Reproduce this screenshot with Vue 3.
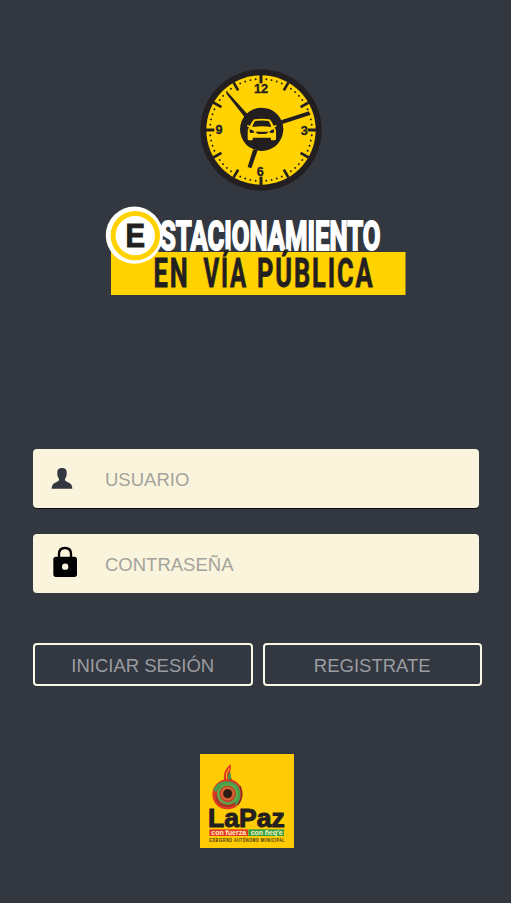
<script setup>
const ticks = [1, 2, 4, 5, 7, 8, 10, 11].map((h) => h * 30)
const quarters = [0, 90, 180, 270]
const dots = Array.from({ length: 60 }, (_, i) => i)
  .filter((i) => i % 5 !== 0)
  .map((i) => i * 6)
</script>

<template>
  <main class="screen">
    <svg class="clock" viewBox="15 14 366 366" aria-hidden="true">
      <circle cx="198" cy="197" r="182" fill="#231f20" />
      <circle cx="198" cy="197" r="164" fill="#ffd200" />
      <g fill="#231f20">
        <circle v-for="a in dots" :key="a" cx="198" cy="44" r="2.9" :transform="`rotate(${a} 198 197)`" />
        <rect v-for="a in ticks" :key="a" x="194" y="32" width="8" height="28" :transform="`rotate(${a} 198 197)`" />
        <rect v-for="a in quarters" :key="a" x="193.5" y="30" width="9" height="27" :transform="`rotate(${a} 198 197)`" />
      </g>
      <g class="numerals">
        <text x="198" y="87" text-anchor="middle">12</text>
        <text x="328" y="212" text-anchor="middle">3</text>
        <text x="196" y="335" text-anchor="middle">6</text>
        <text x="72" y="208" text-anchor="middle">9</text>
      </g>
      <g fill="#231f20">
        <path d="M98 84 L160 152 L151 161 L94 88Z" />
        <path d="M342 141 L345 152 L262 179 L258 168Z" />
        <path d="M174 256 L188 258 L169 312 L158 308Z" />
        <circle cx="200" cy="195" r="65" />
      </g>
      <path
        fill="#ffd200"
        d="M178 165 Q200 162 223 165 Q228 168 236 184 L244 182 Q247 187 239 189 Q243 195 243 204 V223 Q243 228 238 228 H231 Q227 228 227 220 H174 Q174 228 169 228 H162 Q158 228 158 223 V204 Q158 195 162 189 Q154 187 157 182 L165 184 Q173 167 178 165Z"
      />
      <g fill="#231f20">
        <path d="M180 170 Q200 167 221 170 Q226 177 229 188 Q200 184 172 188 Q175 177 180 170Z" />
        <path d="M163 195 Q172 195 179 203 Q174 207 165 205Z" />
        <path d="M238 195 Q229 195 222 203 Q227 207 236 205Z" />
        <path d="M182 202 H220 Q217 209 210 209 H191 Q184 208 182 202Z" />
      </g>
    </svg>

    <svg class="title" viewBox="106 206 300 90">
      <rect x="111" y="252" width="294.5" height="43" fill="#ffd200" />
      <text class="top" x="160" y="249.500" textLength="220.500" lengthAdjust="spacingAndGlyphs">STACIONAMIENTO</text>
      <g class="bottom">
        <text x="153.5" y="287" textLength="36" lengthAdjust="spacingAndGlyphs">EN</text>
        <text x="203.5" y="287" textLength="44.5" lengthAdjust="spacingAndGlyphs">VÍA</text>
        <text x="257" y="287" textLength="117.500" lengthAdjust="spacingAndGlyphs">PÚBLICA</text>
      </g>
      <circle cx="134.4" cy="235.2" r="28.6" fill="#fff" />
      <circle cx="135.3" cy="235.6" r="22.2" fill="none" stroke="#ffd200" stroke-width="5" />
      <text class="badge" x="125.4" y="246.8" textLength="19.5" lengthAdjust="spacingAndGlyphs">E</text>
    </svg>

    <form class="form" @submit.prevent>
      <div class="field">
        <svg class="icon" viewBox="75 75 90 90" aria-hidden="true">
          <path
            fill="#33373f"
            d="M111 84 Q125 84 125 96 L125 104 Q124 112 120 116 V121 Q122 125 132 128 Q142 132 142 146 H80 Q80 132 90 128 Q100 125 102 121 V116 Q98 112 97 104 L97 96 Q97 84 111 84Z"
          />
        </svg>
        <span>USUARIO</span>
      </div>
      <div class="field">
        <svg class="icon" viewBox="75 330 90 90" aria-hidden="true">
          <path d="M102 354 V342 Q102 324 120 324 Q138 324 138 342 V354" fill="none" stroke="#000" stroke-width="7" />
          <rect x="85" y="350" width="71" height="61" rx="8" />
          <circle cx="120.500" cy="380" r="9.500" fill="#fbf4dc" />
        </svg>
        <span>CONTRASEÑA</span>
      </div>
      <div class="actions">
        <button type="submit">INICIAR SESIÓN</button>
        <button type="button">REGISTRATE</button>
      </div>
    </form>

    <svg class="logo" viewBox="15 12 282 282">
      <rect x="15" y="12" width="282" height="282" fill="#ffcb05" />
      <path fill="#df3527" d="M107 42 Q82 62 87 90 Q66 97 55 120 L98 133 L138 113 Q130 96 112 90 Q104 80 105 66 Q110 56 107 42Z" />
      <path fill="none" stroke="#ffcb05" stroke-width="3" d="M103 55 Q88 75 98 93" />
      <path fill="#3b9d4b" d="M104 66 Q94 80 103 98 L114 99 Q104 87 108 72Z" />
      <circle cx="97" cy="133" r="45" fill="#df3527" />
      <path d="M60 124 Q67 100 94 99 Q127 99 131 130 Q132 151 119 163" fill="none" stroke="#43a04c" stroke-width="10" />
      <circle cx="98" cy="132" r="28" fill="none" stroke="#5aa44a" stroke-width="8" />
      <path d="M63 137 Q66 168 99 168 Q112 168 121 160" fill="none" stroke="#8c3c22" stroke-width="4" />
      <circle cx="98" cy="131" r="23" fill="#b5402b" />
      <circle cx="98" cy="131" r="18" fill="none" stroke="#d96a32" stroke-width="5" />
      <circle cx="98" cy="131" r="13" fill="#2a1b17" />
      <path d="M135 108 Q149 139 128 165" fill="none" stroke="#7e2822" stroke-width="4" />
      <text class="city" x="39" y="231" textLength="230" lengthAdjust="spacingAndGlyphs">LaPaz</text>
      <rect x="43" y="238" width="116" height="20" fill="#e33b25" />
      <rect x="160" y="238" width="107" height="20" fill="#35a047" />
      <g class="slogan">
        <text x="49" y="254" textLength="104" lengthAdjust="spacingAndGlyphs">con fuerza</text>
        <text x="167" y="254" textLength="96" lengthAdjust="spacingAndGlyphs">con ñeq'e</text>
      </g>
      <text class="office" x="42" y="275" textLength="228" lengthAdjust="spacingAndGlyphs">GOBIERNO AUTÓNOMO MUNICIPAL</text>
    </svg>
  </main>
</template>

<style>
body {
  margin: 0;
  background: #33373f;
}
</style>

<style scoped>
.screen {
  box-sizing: border-box;
  width: 511px;
  height: 903px;
  padding-top: 69px;
  display: flex;
  flex-direction: column;
  align-items: flex-start;
  overflow: hidden;
  background: #33373f;
  font-family: "Liberation Sans", Arial, sans-serif;
}
svg {
  display: block;
  flex: none;
}
.clock {
  width: 122px;
  height: 122px;
  margin-left: 200px;
}
.numerals {
  font-size: 38px;
  font-weight: 700;
  fill: #231f20;
  stroke: #231f20;
  stroke-width: 1px;
}
.title {
  width: 300px;
  height: 90px;
  margin: 15px 0 0 106px;
  overflow: visible;
}
.top {
  font-family: Roboto, sans-serif;
  font-size: 41px;
  font-weight: 700;
  fill: #fff;
  stroke: #fff;
  stroke-width: 2px;
}
.bottom {
  font-family: Roboto, sans-serif;
  font-size: 40px;
  font-weight: 700;
  letter-spacing: 3px;
  fill: #231f20;
  stroke: #231f20;
  stroke-width: 0.8px;
}
.badge {
  font-size: 33px;
  font-weight: 700;
  fill: #231f20;
  stroke: #231f20;
  stroke-width: 1px;
}
.form {
  margin: 153px 0 0 33px;
  display: flex;
  flex-direction: column;
  gap: 26px;
}
.field {
  box-sizing: border-box;
  width: 446px;
  height: 59px;
  padding: 3px 0 0 17px;
  display: flex;
  align-items: center;
  gap: 25px;
  border-radius: 4px;
  background: #fbf4dc;
  color: #a3a39c;
  font-size: 18.5px;
}
.field:first-child {
  box-shadow: 0 1px 0 #0a0b10;
}
.icon {
  width: 30px;
  height: 30px;
  overflow: visible;
}
.actions {
  display: flex;
  gap: 10px;
  margin-top: 24px;
}
.actions button {
  width: 219.5px;
  height: 43px;
  padding: 2px 0 0;
  border: 2px solid #fbf7e6;
  border-radius: 4px;
  background: transparent;
  color: #9a9da2;
  font: 18.5px "Liberation Sans", Arial, sans-serif;
}
.logo {
  width: 94px;
  height: 94px;
  margin: 68px 0 0 200px;
}
.city {
  font-size: 80px;
  font-weight: 700;
  fill: #231f20;
  stroke: #231f20;
  stroke-width: 3px;
}
.slogan {
  font-size: 21px;
  font-weight: 700;
  fill: #fff3c4;
}
.office {
  font-size: 13.5px;
  font-weight: 700;
  letter-spacing: 2px;
  fill: #3a2c14;
}
</style>
